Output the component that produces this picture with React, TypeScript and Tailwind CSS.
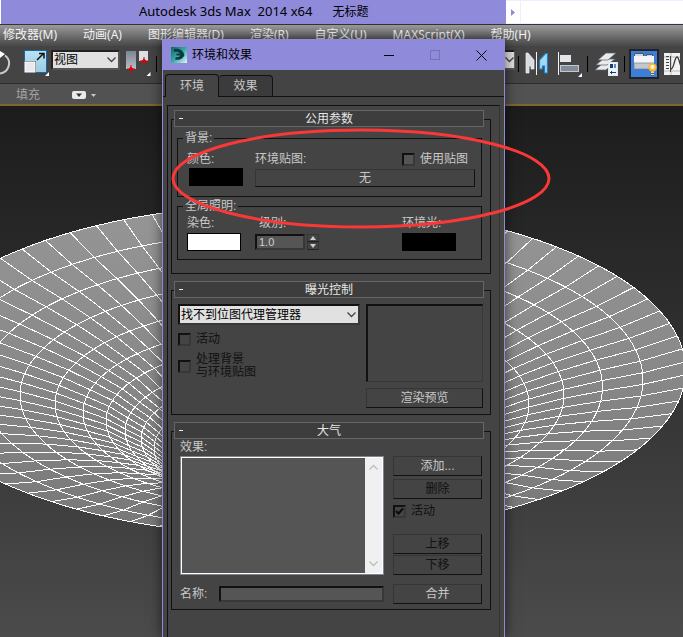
import type { ReactNode } from "react";

const FONT = "font-['Liberation_Sans','Noto_Sans_CJK_SC',sans-serif]";
const UI_FONT = "font-['Noto_Sans','Noto_Sans_CJK_SC',sans-serif]";

/* ---------- viewport mesh ---------- */

type Ring = { a: number; cy: number };

const CX = 292;
const FLATTEN = 0.4225;
const SEGMENTS = 80;
const PHASE = 2.8;

const rings: Ring[] = [
  { a: 393.6, cy: 370 },
  { a: 351, cy: 380 },
  { a: 310.5, cy: 387 },
  { a: 272, cy: 395 },
  { a: 237, cy: 404 },
  { a: 209, cy: 413 },
  { a: 186, cy: 421 },
  { a: 167, cy: 431 },
  { a: 151, cy: 439 },
  { a: 138, cy: 448 },
  { a: 127, cy: 457 },
  { a: 117, cy: 467 },
];

function spoke(index: number): string {
  const t = ((index * 360) / SEGMENTS + PHASE) * (Math.PI / 180);
  return rings
    .map((r) => `${(CX + r.a * Math.cos(t)).toFixed(1)},${(r.cy - r.a * FLATTEN * Math.sin(t)).toFixed(1)}`)
    .join(" ");
}

function Mesh() {
  return (
    <svg
      className="absolute inset-0 size-full"
      viewBox="0 106 683 531"
      preserveAspectRatio="xMidYMin slice"
      aria-hidden="true"
    >
      <defs>
        <linearGradient id="surface" x1="0" y1="0" x2="0" y2="1">
          <stop offset="0" stopColor="#969696" />
          <stop offset="0.45" stopColor="#8a8a8a" />
          <stop offset="1" stopColor="#777777" />
        </linearGradient>
      </defs>
      <ellipse cx={CX} cy={rings[0].cy} rx={rings[0].a} ry={rings[0].a * FLATTEN} fill="url(#surface)" />
      <g fill="none" stroke="#fff" strokeWidth="1" shapeRendering="crispEdges">
        {rings.map((r) => (
          <ellipse key={r.a} cx={CX} cy={r.cy} rx={r.a} ry={r.a * FLATTEN} />
        ))}
        {Array.from({ length: SEGMENTS }, (_, i) => (
          <polyline key={i} points={spoke(i)} />
        ))}
      </g>
    </svg>
  );
}

/* ---------- main window ---------- */

function TitleBar() {
  return (
    <div className="flex h-6 bg-[#8f8ad9]">
      <div className="w-[3px] shrink-0 border-l border-white" />
      <div className={`flex min-w-0 flex-1 items-center pl-[136px] text-[13px] text-black ${UI_FONT}`}>
        <span className="whitespace-pre">Autodesk 3ds Max  2014 x64</span>
        <span className="ml-5 text-xs">无标题</span>
      </div>
      <div className="flex w-[177px] shrink-0 gap-px border-y border-[#efedff] bg-[#efedff]">
        <div className="flex w-[14px] items-center justify-center bg-white">
          <svg className="h-[7px] w-1" viewBox="0 0 4 7" aria-hidden="true">
            <path d="M0 0 4 3.5 0 7z" fill="#8f8ad9" />
          </svg>
        </div>
        <div className="flex-1 bg-white" />
      </div>
    </div>
  );
}

const menus = ["修改器(M)", "动画(A)", "图形编辑器(D)", "渲染(R)", "自定义(U)", "MAXScript(X)", "帮助(H)"];

function MenuBar() {
  return (
    <nav
      className={`flex h-[22px] items-center gap-[26px] border-t border-[#333] bg-linear-to-b from-[#9b9b9b] to-[#484848] pb-[2px] pl-[3px] text-xs whitespace-nowrap text-[#f2f2f2] ${UI_FONT}`}
    >
      {menus.map((m) => (
        <button key={m} type="button">
          {m}
        </button>
      ))}
    </nav>
  );
}

function ToolSeparator() {
  return <span className="h-4 w-px bg-black" />;
}

function Toolbar() {
  return (
    <div className="flex h-[38px] justify-between border-b border-[#2b2b2b] bg-[#444]">
      <div className="flex items-center pb-[2px]">
        <button type="button" aria-label="旋转" className="w-[14px]">
          <svg width="14" height="26" viewBox="0 0 14 26" fill="none">
            <path d="M5 4.500a10 10 0 0 1-6 18" stroke="#c9c9c9" strokeWidth="2" />
            <path d="M0 0 5 3 0 7z" fill="#fff" />
          </svg>
        </button>
        <button type="button" aria-label="缩放" className="ml-[10px]">
          <svg width="26" height="27" viewBox="0 0 26 27">
            <defs>
              <linearGradient id="scaleBlue" x1="0" y1="0" x2="0" y2="1">
                <stop offset="0" stopColor="#b9e2f4" />
                <stop offset="1" stopColor="#9dcbe3" />
              </linearGradient>
            </defs>
            <rect x="0.5" y="0.5" width="22" height="22" fill="url(#scaleBlue)" stroke="#1767a5" />
            <rect x="0" y="11" width="12" height="12" fill="#444" />
            <rect x="1" y="12" width="10" height="10" fill="#e8e8ee" stroke="#fff" />
            <path d="M13 10 19 4M15 3.500h5v5" fill="none" stroke="#111" strokeWidth="1.500" />
            <path d="M25 22v4h-4z" fill="#fff" />
          </svg>
        </button>
        <div className="relative ml-px w-[69px] self-start pt-1">
          <select
            aria-label="参考坐标系"
            className={`block h-5 w-full appearance-none rounded-none border-2 border-[#222] border-r-[#555] border-b-[#555] bg-[#e1e1e1] px-px text-xs leading-4 text-black ${FONT}`}
          >
            <option>视图</option>
          </select>
          <Chevron className="absolute top-[11px] right-[4px] text-[#444]" />
        </div>
        <button type="button" aria-label="使用轴点中心" className="ml-[5px]">
          <svg width="26" height="27" viewBox="0 0 26 27">
            <defs>
              <linearGradient id="steel" x1="0" y1="0" x2="0" y2="1">
                <stop offset="0" stopColor="#7c8592" />
                <stop offset="1" stopColor="#b9bec6" />
              </linearGradient>
            </defs>
            <rect x="1" y="1" width="10" height="18" fill="url(#steel)" />
            <rect x="14" y="1" width="9" height="10" fill="#dcdfe3" />
            <g stroke="#e00000" strokeWidth="1">
              <path d="M6 15v8M2 19h8M19 7v8M15 11h8" />
            </g>
            <path d="M6 16.500 8.500 19 6 21.500 3.500 19zM19 8.500 21.500 11 19 13.500 16.500 11z" fill="#e00000" />
            <path d="M25.500 22v4h-4z" fill="#fff" />
          </svg>
        </button>
        <span className="ml-[5px] flex">
          <ToolSeparator />
        </span>
      </div>
      <div className="flex w-[180px] shrink-0 items-center pb-[2px]">
        <div className="mt-1 flex h-5 w-3 items-center justify-end self-start border-y-2 border-r border-t-[#222] border-r-[#666] border-b-[#555] bg-[#e1e1e1]">
          <Chevron className="text-[#444]" />
        </div>
        <span className="mr-[6px] ml-[3px] flex">
          <ToolSeparator />
        </span>
        <button type="button" aria-label="镜像">
          <svg width="24" height="24" viewBox="0 0 24 24">
            <path d="M1 1h2l6 7v9H6v-3H4v7H1z" fill="#d9dce2" stroke="#f0f1f4" strokeWidth="0.700" />
            <path d="M22.500 1.500h-2l-6 6.500v9h3v-3h2v7h3z" fill="#a5d8f0" stroke="#1f7fc4" strokeWidth="1.200" />
            <path d="M11.500 0v23" stroke="#f4f4f4" />
          </svg>
        </button>
        <button type="button" aria-label="对齐" className="ml-[8px]">
          <svg width="26" height="26" viewBox="0 0 26 26">
            <path d="M1.500 1v23" stroke="#f4f4f4" />
            <rect x="3" y="4" width="11" height="7" fill="#e4e6ea" />
            <rect x="3.500" y="14.500" width="18" height="6" fill="#858c99" stroke="#c4c8d0" />
            <path d="M25 22v4h-4z" fill="#fff" />
          </svg>
        </button>
        <span className="mr-[6px] ml-[4px] flex">
          <ToolSeparator />
        </span>
        <button type="button" aria-label="层管理器">
          <svg width="26" height="26" viewBox="0 0 26 26">
            <g fill="#e9eaec" stroke="#585d66" strokeWidth="0.700">
              <path d="M1 19 8 13h11l-7 6z" />
              <path d="M2 14 9 8h12l-8 6z" />
              <path d="M4 9 12 2h10l-8 7z" />
            </g>
            <rect x="14.500" y="11.500" width="9" height="13" fill="#eef4fb" stroke="#dfe6ee" />
            <rect x="16" y="13" width="3" height="4" fill="#1d3c66" />
            <rect x="20" y="13" width="2" height="4" fill="#4d8fd0" />
            <path d="M16 21.500h6M17.500 20v3" stroke="#1d3c66" />
          </svg>
        </button>
        <span className="mx-[4px] flex">
          <ToolSeparator />
        </span>
        <button type="button" aria-label="功能区" className="size-[30px] border-2 border-[#1d2430] bg-[#3d7fd8]">
          <svg width="26" height="26" viewBox="0 0 26 26">
            <path d="M3.500 6V2.500h9V6M15.500 6V3.500h6V6" fill="#cfd6df" stroke="#4a5564" />
            <rect x="3" y="5" width="20" height="8" fill="#f2f4f7" />
            <rect x="3" y="12" width="20" height="6" fill="#c3c8d0" stroke="#6c7684" strokeWidth="0.600" />
            <circle cx="21.500" cy="16.500" r="4.200" fill="#ffb52e" />
            <circle cx="21.500" cy="16" r="2.200" fill="#fff4c2" />
            <rect x="20" y="20.500" width="3" height="4" fill="#e9d9a0" />
            <path d="M20 22.500h3M20 24.500h3" stroke="#59616c" />
          </svg>
        </button>
        <button type="button" aria-label="曲线编辑器" className="ml-[5px] w-4 overflow-hidden">
          <svg width="24" height="22" viewBox="0 0 24 22">
            <rect width="24" height="22" fill="#f2f2f2" />
            <path d="M7 0v22M0 4h24M0 18h24" stroke="#b9b9b9" />
            <path d="M2 3.500h3M2 6.500h3M2 9.500h3M2 12.500h3M2 15.500h3M6.500 3v16" stroke="#444" />
            <path d="M7 16c3 0 3.500-12 6-12s3 12 6 12" fill="none" stroke="#333" strokeWidth="1.300" />
          </svg>
        </button>
      </div>
    </div>
  );
}

function Ribbon() {
  return (
    <div
      className={`flex h-[22px] items-center border-b-2 border-[#7d682b] bg-[#525252] pt-[2px] pl-4 text-xs text-[#a3a3a3] ${UI_FONT}`}
    >
      <button type="button">填充</button>
      <button type="button" aria-label="功能区选项" className="ml-8 flex items-center gap-[5px]">
        <svg width="14" height="8" viewBox="0 0 14 8">
          <rect width="14" height="8" rx="2" fill="#e6e9ee" />
          <path d="M4 2.500h6L7 6z" fill="#333" />
        </svg>
        <svg width="5" height="3" viewBox="0 0 5 3">
          <path d="M0 0h5L2.500 3z" fill="#c8c8c8" />
        </svg>
      </button>
    </div>
  );
}

function Chevron({ className }: { className: string }) {
  return (
    <svg className={`pointer-events-none ${className}`} width="9" height="6" viewBox="0 0 9 6" aria-hidden="true">
      <path d="M0.500 0.500 4.500 4.500 8.500 0.500" fill="none" stroke="currentColor" strokeWidth="1.300" />
    </svg>
  );
}

/* ---------- dialog ---------- */

function DialogTitle() {
  return (
    <header className="flex h-[30px] items-center bg-[#8f8ad9] pl-2 text-black">
      <svg width="16" height="16" viewBox="0 0 16 16" aria-hidden="true">
        <defs>
          <linearGradient id="appIcon" x1="0" y1="0" x2="1" y2="1">
            <stop offset="0" stopColor="#0f6468" />
            <stop offset="0.500" stopColor="#3aa9a5" />
            <stop offset="1" stopColor="#e2f8f6" />
          </linearGradient>
        </defs>
        <rect width="16" height="16" fill="url(#appIcon)" />
        <path d="M3 2c5-1 9 1 10.500 6C12 12 8.500 13.500 4 12.500l1-2.500c2 .5 3.500 0 4-1.500H5.500v-2H9C8 5 6 4.500 3 5z" fill="#083a40" />
      </svg>
      <h1 className={`ml-[5px] flex-1 text-xs ${UI_FONT}`}>环境和效果</h1>
      <button type="button" aria-label="最小化" className="flex w-[46px] justify-center">
        <svg width="10" height="10" viewBox="0 0 10 10">
          <path d="M0 5.500h10" stroke="#000" />
        </svg>
      </button>
      <button type="button" aria-label="最大化" disabled className="flex w-[46px] justify-center">
        <svg width="10" height="10" viewBox="0 0 10 10">
          <rect x="0.500" y="0.500" width="9" height="9" fill="none" stroke="#7872b4" />
        </svg>
      </button>
      <button type="button" aria-label="关闭" className="flex w-[46px] justify-center">
        <svg width="11" height="11" viewBox="0 0 11 11">
          <path d="M0.500 0.500 10.500 10.500M10.500 0.500 0.500 10.500" stroke="#000" />
        </svg>
      </button>
    </header>
  );
}

function Rollout({ title, children }: { title: string; children: ReactNode }) {
  return (
    <section>
      <h2 className="relative mr-[7px] ml-[3px] border border-[#666] bg-[#3d3d3d] text-[#e6e6e6]">
        <button type="button" className="flex h-[15px] w-full items-center">
          <span className="ml-1 h-px w-1 bg-[#eee]" />
          <span className="flex-1 pr-2 text-center">{title}</span>
        </button>
      </h2>
      <div className="-mt-2 border border-[#111] pt-2 pr-[7px] pl-[5px]">{children}</div>
    </section>
  );
}

function PushButton({ children, className = "h-5", disabled = false }: { children: ReactNode; className?: string; disabled?: boolean }) {
  return (
    <button
      type="button"
      disabled={disabled}
      className={`flex w-full items-center justify-center border border-[#353535] border-r-[#111] border-b-[#111] text-[#c8c8c8] disabled:text-[#111] ${className}`}
    >
      {children}
    </button>
  );
}

function CheckBox({ label, fill, disabled = false, checked = false }: { label: ReactNode; fill: string; disabled?: boolean; checked?: boolean }) {
  return (
    <label className={`flex items-center gap-[5px] ${disabled ? "text-[#111]" : ""}`}>
      <span className="relative flex">
        <input
          type="checkbox"
          defaultChecked={checked}
          disabled={disabled}
          className={`peer size-[13px] appearance-none border-2 border-[#111] border-r-[#383838] border-b-[#383838] ${fill}`}
        />
        <svg
          className="pointer-events-none absolute inset-0 hidden peer-checked:block"
          width="13"
          height="13"
          viewBox="0 0 13 13"
          aria-hidden="true"
        >
          <path d="M3 6 5.500 8.500 10 3.500" fill="none" stroke="#0a0a0a" strokeWidth="2" />
        </svg>
      </span>
      {label}
    </label>
  );
}

function CommonParameters() {
  return (
    <Rollout title="公用参数">
      <div className="pt-1 pr-px pb-[13px]">
        <fieldset className="border border-[#111] pr-[6px] pb-[9px] pl-[9px]">
          <legend className="-ml-1 px-[2px] leading-3">背景:</legend>
          <div className="flex gap-3 pt-2">
            <div className="w-14">
              <div className="leading-[14px]">颜色:</div>
              <button type="button" aria-label="背景颜色" className="mt-[2px] ml-[2px] block h-[18px] w-[54px] bg-black" />
            </div>
            <div className="flex-1">
              <div className="flex h-[14px] items-center justify-between pr-[7px]">
                <span>环境贴图:</span>
                <CheckBox label="使用贴图" fill="bg-[#555]" />
              </div>
              <div className="mt-[3px]">
                <PushButton className="h-[18px]">无</PushButton>
              </div>
            </div>
          </div>
        </fieldset>
        <fieldset className="mt-[3px] border border-[#111] pr-[6px] pb-2 pl-[9px]">
          <legend className="-ml-1 px-[2px] leading-3">全局照明:</legend>
          <div className="flex gap-[14px] pt-1 leading-[14px]">
            <div className="w-[54px]">
              <div>染色:</div>
              <button type="button" aria-label="染色" className="mt-[3px] block h-[18px] w-[54px] border border-black bg-white" />
            </div>
            <div>
              <label htmlFor="level" className="block pl-1">
                级别:
              </label>
              <div className="mt-1 flex gap-[2px]">
                <input
                  id="level"
                  defaultValue="1.0"
                  className="h-4 w-[50px] border-2 border-[#111] border-r-[#383838] border-b-[#383838] bg-[#555] px-[2px] text-[11px] text-[#d0d0d0]"
                />
                <div className="flex w-3 flex-col">
                  <button type="button" aria-label="增加" className="flex h-2 items-center justify-center border border-[#353535] border-b-[#222]">
                    <svg width="6" height="4" viewBox="0 0 6 4">
                      <path d="M0 4 3 0 6 4z" fill="#ccc" />
                    </svg>
                  </button>
                  <button type="button" aria-label="减少" className="flex h-2 items-center justify-center border border-[#353535] border-b-[#222]">
                    <svg width="6" height="4" viewBox="0 0 6 4">
                      <path d="M0 0 3 4 6 0z" fill="#ccc" />
                    </svg>
                  </button>
                </div>
              </div>
            </div>
            <div className="mr-[19px] ml-auto w-[54px]">
              <div>环境光:</div>
              <button type="button" aria-label="环境光" className="mt-[3px] block h-[18px] w-full bg-black" />
            </div>
          </div>
        </fieldset>
      </div>
    </Rollout>
  );
}

function ExposureControl() {
  return (
    <Rollout title="曝光控制">
      <div className="flex gap-[6px] pt-[5px] pb-[6px] pl-px">
        <div className="flex-1">
          <div className="relative">
            <select
              aria-label="曝光控制类型"
              className="block h-[21px] w-full appearance-none rounded-none border-2 border-[#111] border-r-[#383838] border-b-[#383838] bg-[#e1e1e1] px-px leading-4 text-black"
            >
              <option>找不到位图代理管理器</option>
            </select>
            <Chevron className="absolute top-2 right-1 text-[#444]" />
          </div>
          <div className="mt-2 flex flex-col gap-[7px] leading-[13px]">
            <CheckBox label="活动" fill="bg-transparent" disabled />
            <CheckBox
              label={
                <span>
                  处理背景
                  <br />
                  与环境贴图
                </span>
              }
              fill="bg-transparent"
              disabled
            />
          </div>
        </div>
        <div className="w-[117px]">
          <div className="h-[78px] border-t-2 border-r border-b border-l-2 border-[#111] border-r-[#383838] border-b-[#383838]" />
          <div className="mt-[6px]">
            <PushButton>渲染预览</PushButton>
          </div>
        </div>
      </div>
    </Rollout>
  );
}

function Atmosphere() {
  return (
    <Rollout title="大气">
      <div className="pr-px pb-[5px] pl-[3px]">
        <div className="leading-[14px]">效果:</div>
        <div className="mt-[2px] flex gap-[9px]">
          <div className="flex flex-1 border border-[#7d8590]">
            <div className="flex flex-1 border border-white bg-[#555]">
              <div role="listbox" aria-label="效果" className="flex-1" />
              <div className="flex w-[17px] flex-col justify-between bg-[#f0f0f0] py-[6px] text-[#bdbdbd]">
                <button type="button" aria-label="向上滚动" className="flex justify-center">
                  <Chevron className="rotate-180" />
                </button>
                <button type="button" aria-label="向下滚动" className="flex justify-center">
                  <Chevron className="" />
                </button>
              </div>
            </div>
          </div>
          <div className="w-[89px]">
            <PushButton>添加...</PushButton>
            <div className="mt-[3px]">
              <PushButton disabled>删除</PushButton>
            </div>
            <div className="mt-[5px] mb-[16px] leading-[14px]">
              <CheckBox label="活动" fill="bg-transparent" disabled checked />
            </div>
            <PushButton disabled>上移</PushButton>
            <div className="mt-px">
              <PushButton disabled>下移</PushButton>
            </div>
          </div>
        </div>
        <div className="mt-[9px] flex items-center gap-[9px]">
          <label htmlFor="effect-name" className="w-[30px] whitespace-nowrap">
            名称:
          </label>
          <input
            id="effect-name"
            className="h-4 min-w-0 flex-1 border-2 border-[#111] border-r-[#383838] border-b-[#383838] bg-[#555] px-1 text-[#d0d0d0]"
          />
          <div className="w-[89px]">
            <PushButton>合并</PushButton>
          </div>
        </div>
      </div>
    </Rollout>
  );
}

function EnvironmentDialog() {
  return (
    <div
      role="dialog"
      aria-label="环境和效果"
      className={`absolute top-[39px] bottom-0 left-[162px] flex w-[343px] flex-col border-x border-t border-[#8f8ad9] bg-[#444] text-xs text-[#c8c8c8] shadow-[0_0_12px_rgba(0,0,0,0.6)] ${FONT}`}
    >
      <DialogTitle />
      <div role="tablist" className="flex border-b border-[#111] pt-1 pl-[2px]">
        <button type="button" role="tab" aria-selected="true" className="-mb-px h-[23px] w-[54px] rounded-t-sm border border-b-0 border-[#111] bg-[#444]">
          环境
        </button>
        <button type="button" role="tab" aria-selected="false" className="mt-px h-[21px] w-[54px] rounded-t-sm border border-b-0 border-l-0 border-[#111] bg-[#3b3b3b]">
          效果
        </button>
      </div>
      <div className="mt-2 mr-1 ml-1 flex flex-1 flex-col gap-[7px] border-t border-r border-l border-[#111] border-r-[#333] pt-1 pr-2 pl-[3px]">
        <CommonParameters />
        <ExposureControl />
        <Atmosphere />
      </div>
    </div>
  );
}

export default function App() {
  return (
    <main className="relative flex min-h-screen flex-col overflow-hidden bg-[#444]">
      <TitleBar />
      <MenuBar />
      <Toolbar />
      <Ribbon />
      <div className="relative flex-1 bg-linear-to-b from-[#1c1c1c] to-[#4b4b4b]">
        <Mesh />
      </div>
      <EnvironmentDialog />
      <svg
        className="pointer-events-none absolute top-[128px] left-[171px]"
        width="380"
        height="102"
        viewBox="0 0 380 102"
        aria-hidden="true"
      >
        <ellipse cx="190" cy="50.500" rx="188" ry="48.500" fill="none" stroke="#fb3838" strokeWidth="3" />
      </svg>
    </main>
  );
}
